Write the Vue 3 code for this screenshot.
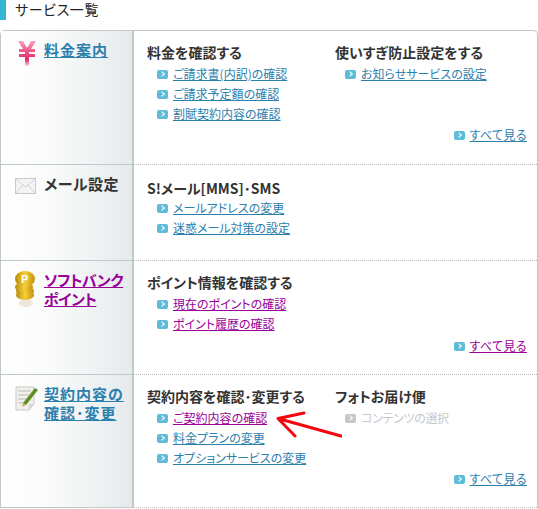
<script setup>
const rows = [
  { title: ['料金案内'], icon: 'yen', cls: 'r1', visited: false, more: 'blue',
    cols: [
      { h: '料金を確認する', links: [{ t: 'ご請求書(内訳)の確認' }, { t: 'ご請求予定額の確認' }, { t: '割賦契約内容の確認' }] },
      { h: '使いすぎ防止設定をする', links: [{ t: 'お知らせサービスの設定' }] }
    ] },
  { title: ['メール設定'], icon: 'mail', cls: 'r2', plain: true,
    cols: [
      { h: 'S!メール[MMS]･SMS', links: [{ t: 'メールアドレスの変更' }, { t: '迷惑メール対策の設定' }] }
    ] },
  { title: ['ソフトバンク', 'ポイント'], icon: 'coin', cls: 'r3', visited: true, more: 'purple',
    cols: [
      { h: 'ポイント情報を確認する', links: [{ t: '現在のポイントの確認', v: true }, { t: 'ポイント履歴の確認', v: true }] }
    ] },
  { title: ['契約内容の', '確認･変更'], icon: 'note', cls: 'r4', more: 'blue',
    cols: [
      { h: '契約内容を確認･変更する', links: [{ t: 'ご契約内容の確認', v: true }, { t: '料金プランの変更' }, { t: 'オプションサービスの変更' }] },
      { h: 'フォトお届け便', links: [{ t: 'コンテンツの選択', off: true }] }
    ] }
]
</script>

<template>
  <div class="page">
    <div class="head"><span class="bar"></span><h1>サービス一覧</h1></div>
    <div class="card">
      <section v-for="r in rows" :key="r.cls" class="row" :class="r.cls">
        <div class="side">
          <svg v-if="r.icon === 'yen'" class="ic" width="30" height="32" viewBox="0 0 30 32">
            <defs><linearGradient id="yg" x1="0" y1="0" x2="0" y2="1"><stop offset="0" stop-color="#f9a3c0"/><stop offset=".35" stop-color="#f0608f"/><stop offset=".75" stop-color="#e8286c"/><stop offset="1" stop-color="#fbdbe6"/></linearGradient></defs>
            <path d="M5 1h5l4 7 4-7h5l-5 8h4v3h-6v2h6v3h-6v9h-4v-9H6v-3h6v-2H6V9h4z" fill="url(#yg)"/>
          </svg>
          <svg v-if="r.icon === 'mail'" class="ic" width="30" height="24" viewBox="0 0 30 24">
            <rect x="2.500" y="4.500" width="20" height="15" fill="#f4f4f4" stroke="#c9c9c9"/>
            <path d="M3 5l9.500 8L22 5M3 19l7-8M22 19l-7-8" fill="none" stroke="#d2d2d2"/>
          </svg>
          <svg v-if="r.icon === 'coin'" class="ic" width="30" height="38" viewBox="0 0 30 38">
            <defs><linearGradient id="cg" x1="0" y1="0" x2="1" y2="0"><stop offset="0" stop-color="#b98a06"/><stop offset=".5" stop-color="#f7cf3a"/><stop offset="1" stop-color="#c3920c"/></linearGradient></defs>
            <ellipse cx="13" cy="33" rx="7" ry="4" fill="#ece7d8"/>
            <ellipse cx="12" cy="25" rx="9" ry="5" fill="url(#cg)"/>
            <ellipse cx="12" cy="21" rx="9" ry="5" fill="url(#cg)"/>
            <ellipse cx="11" cy="17" rx="9" ry="5" fill="url(#cg)"/>
            <ellipse cx="12" cy="9" rx="10" ry="8" fill="url(#cg)"/>
            <text x="8" y="13" font-size="11" font-weight="700" fill="#fff" font-family="Liberation Sans">P</text>
          </svg>
          <svg v-if="r.icon === 'note'" class="ic" width="30" height="28" viewBox="0 0 30 28">
            <path d="M3 3h18v17l-5 6H3z" fill="#f0f0ee" stroke="#c8c8c4"/>
            <path d="M5 7h13M5 11h11M5 15h8M5 19h7" stroke="#b9b9b5"/>
            <path d="M16 26l5-6h-5z" fill="#d6d6d2"/>
            <path d="M10 19L22 4l3 2-12 15z" fill="#5f8f1d"/>
            <path d="M9 23l1-4 3 2z" fill="#d8a85a"/>
          </svg>
          <a v-if="r.plain" class="st plain"><span v-for="l in r.title" :key="l">{{ l }}</span></a>
          <a v-else class="st" :class="{ vis: r.visited }"><span v-for="l in r.title" :key="l">{{ l }}</span></a>
        </div>
        <div class="main">
          <div class="cols">
            <div v-for="c in r.cols" :key="c.h" class="col">
              <h2>{{ c.h }}</h2>
              <ul>
                <li v-for="l in c.links" :key="l.t">
                  <i class="chev" :class="{ off: l.off }"></i>
                  <span v-if="l.off" class="dis">{{ l.t }}</span>
                  <a v-else class="lk" :class="{ vis: l.v }">{{ l.t }}</a>
                </li>
              </ul>
            </div>
          </div>
          <div v-if="r.more" class="more">
            <i class="chev"></i><a class="lk wide" :class="{ vis: r.more === 'purple' }">すべて見る</a>
          </div>
        </div>
      </section>
      <svg class="arrow" width="70" height="34" viewBox="0 0 70 34">
        <path d="M6 9.500L32 4M6 9.500L23 27M6 9.500L69 27" fill="none" stroke="#f6060f" stroke-width="3" stroke-linecap="round"/>
      </svg>
    </div>
  </div>
</template>

<style scoped>
.page { width: 538px; height: 509px; overflow: hidden; background: #fff; position: relative;
  font-family: "Noto Sans CJK JP", "Liberation Sans", sans-serif; font-feature-settings: "palt"; color: #333; }
.head { display: flex; align-items: flex-start; height: 30px; gap: 9px; }
.bar { width: 6px; height: 20px; background: #33b5d6; }
h1 { margin: 0; font-size: 14px; line-height: 18px; font-weight: 400; letter-spacing: .6px; color: #222; }
.card { border: 1px solid #c0c8cc; border-bottom: 0; border-radius: 5px 5px 0 0; position: relative; }
.row { display: flex; border-bottom: 1px dotted #bbb; box-sizing: border-box; }
.r1 { height: 134px; }
.r2 { height: 96px; }
.r3 { height: 114px; }
.r4 { height: 133px; }
.side { width: 133px; box-sizing: border-box; border-right: 2px solid #c0c8cc; border-bottom: 1px solid #c0c8cc; margin-bottom: -1px;
  background: linear-gradient(90deg, #fff 0%, #f9fafa 40%, #e6eaec 100%); display: flex; padding: 9px 0 0 12px; gap: 1px; flex: none; }
.ic { flex: none; }
.st { display: flex; flex-direction: column; font-size: 15px; line-height: 19px; font-weight: 700; color: #2c80ad; }
.st span { display: block; text-decoration: underline; letter-spacing: 1px; white-space: nowrap; }
.r3 .st span { letter-spacing: -.5px; }
.st.vis { color: #990099; }
.st.plain { color: #333; }
.st.plain span { text-decoration: none; letter-spacing: .5px; }
.main { flex: 1; display: flex; flex-direction: column; padding: 12px 10px 20px 13px; min-width: 0; }
.r1 .main { padding-bottom: 21px; }
.r2 .main { padding-top: 14px; }
.cols { display: flex; }
.col { width: 188px; flex: none; }
h2 { margin: 0 0 3px; font-size: 14px; line-height: 18px; font-weight: 700; color: #333; white-space: nowrap; }
.r2 h2 { margin-bottom: 1px; }
ul { list-style: none; margin: 0; padding: 0 0 0 10px; }
li { display: flex; align-items: center; height: 20px; gap: 5px; }
.chev { flex: none; width: 11px; height: 9px; border-radius: 2px; background: #5fbcd9; position: relative; display: block; }
.chev::after { content: ""; position: absolute; left: 3px; top: 2.500px; width: 3px; height: 3px; border-top: 1px solid #fff; border-right: 1px solid #fff; transform: rotate(45deg); }
.chev.off { background: #c8c8c8; }
.lk { font-size: 12px; line-height: 16px; color: #2c80ad; text-decoration: underline; white-space: nowrap; }
.lk.wide { letter-spacing: .4px; }
.lk.vis { color: #990099; }
.dis { font-size: 12px; line-height: 16px; color: #c8c8c8; white-space: nowrap; letter-spacing: -.3px; }
.more { margin-top: auto; display: flex; justify-content: flex-end; align-items: center; gap: 4px; height: 16px; }
.arrow { position: absolute; left: 271px; top: 378px; }
</style>
